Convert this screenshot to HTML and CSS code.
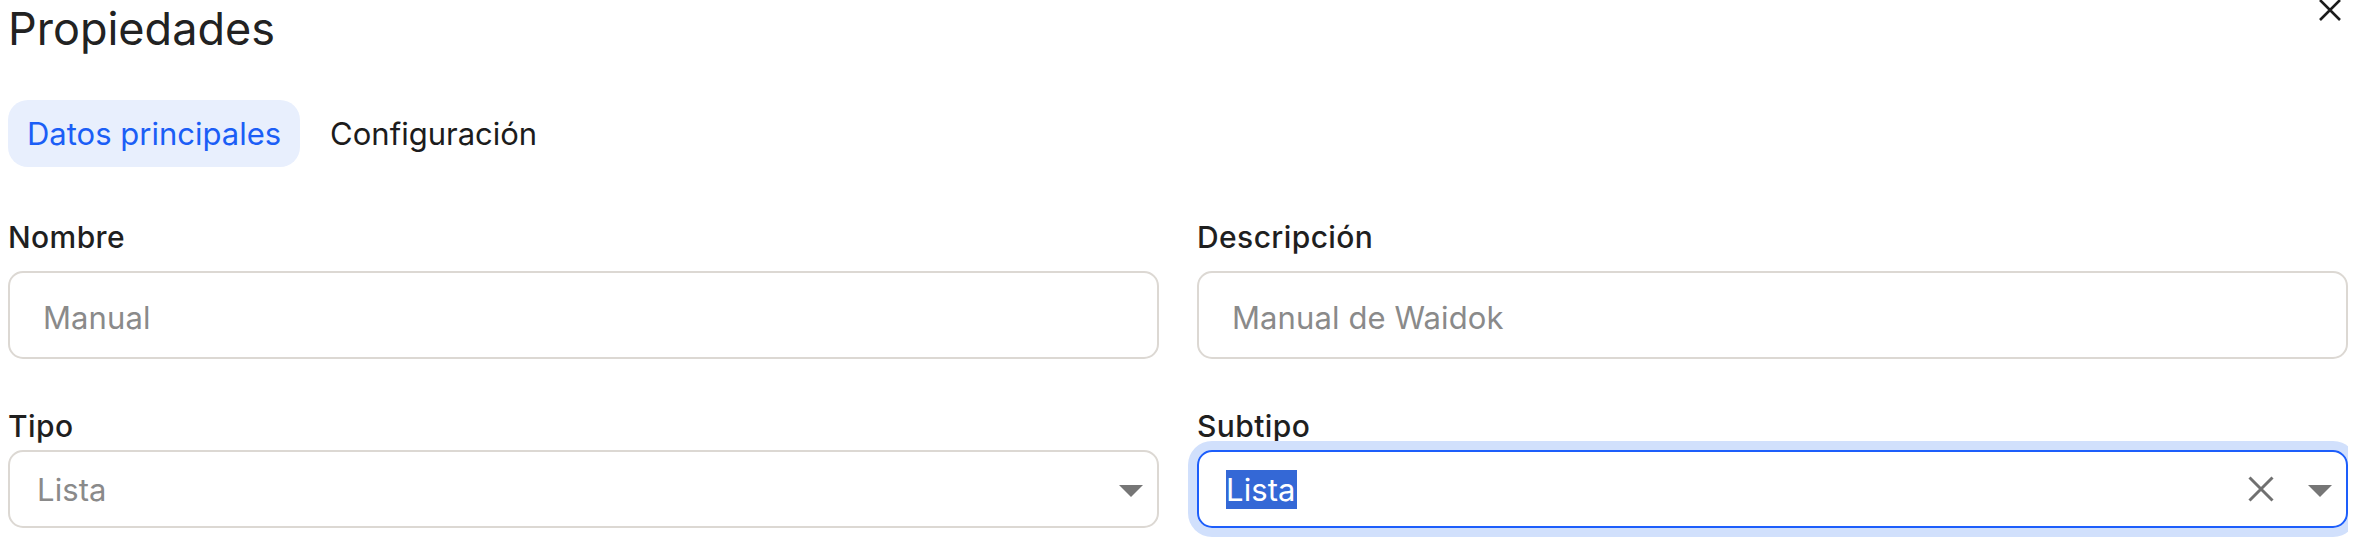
FILE: index.html
```html
<!DOCTYPE html>
<html lang="es">
<head>
<meta charset="utf-8">
<title>Propiedades</title>
<link rel="stylesheet" href="styles.css">
</head>
<body>
<div class="dialog">
  <svg class="close" viewBox="0 0 24 22" aria-label="Cerrar">
    <path d="M2 0 L22 20 M22 0 L2 20" stroke="#1c1c1c" stroke-width="2.6" fill="none"/>
  </svg>
  <h1 class="title">Propiedades</h1>
  <div class="tabs">
    <div class="tab active">Datos principales</div>
    <div class="tab">Configuración</div>
  </div>
  <div class="form">
    <div class="field">
      <div class="label">Nombre</div>
      <div class="input"><span class="placeholder">Manual</span></div>
    </div>
    <div class="field">
      <div class="label">Descripción</div>
      <div class="input"><span class="placeholder">Manual de Waidok</span></div>
    </div>
    <div class="field select-field">
      <div class="label">Tipo</div>
      <div class="select">
        <span class="placeholder value">Lista</span>
        <svg class="arrow" viewBox="0 0 24 12"><path d="M0 0 H24 L12 12 Z" fill="#767676"/></svg>
      </div>
    </div>
    <div class="field select-field">
      <div class="label">Subtipo</div>
      <div class="select focused">
        <span class="value"><span class="selected">Lista</span></span>
        <svg class="clear" viewBox="0 0 26 26"><path d="M1.5 1.5 L24.5 24.5 M24.5 1.5 L1.5 24.5" stroke="#707070" stroke-width="3" fill="none"/></svg>
        <svg class="arrow" viewBox="0 0 24 12"><path d="M0 0 H24 L12 12 Z" fill="#767676"/></svg>
      </div>
    </div>
  </div>
</div>
</body>
</html>
```
FILE: styles.css
```css
html, body {
  margin: 0;
  background: #ffffff;
}
body {
  font-family: Inter, "Noto Sans", sans-serif;
  color: #1f1f1f;
}
.dialog {
  position: relative;
  padding: 1px 26px 0 8px;
}
.close {
  position: absolute;
  top: 0;
  right: 32px;
  width: 24px;
  height: 22px;
}
.title {
  margin: 0;
  font-size: 45px;
  font-weight: 400;
  line-height: 56px;
  color: #222222;
}
.tabs {
  display: flex;
  gap: 11px;
  margin-top: 43px;
}
.tab {
  height: 67px;
  padding: 0 19px;
  border-radius: 20px;
  display: flex;
  align-items: center;
  font-size: 31px;
  letter-spacing: 0;
  color: #1c1c1c;
}
.tab.active {
  background: #e8effd;
  color: #1b5ef6;
}
.form {
  display: grid;
  grid-template-columns: 1fr 1fr;
  column-gap: 38px;
  row-gap: 49px;
  margin-top: 52px;
  padding-bottom: 14px;
  overflow: hidden;
}
.field {
  display: flex;
  flex-direction: column;
  gap: 16px;
  min-width: 0;
}
.field.select-field {
  gap: 6px;
}
.label {
  font-size: 30px;
  font-weight: 500;
  line-height: 36px;
  letter-spacing: 0.4px;
  color: #1f1f1f;
}
.input {
  box-sizing: border-box;
  height: 88px;
  border: 2px solid #dcd8d3;
  border-radius: 15px;
  padding: 4px 33px 0;
  display: flex;
  align-items: center;
  font-size: 31px;
  letter-spacing: 0.1px;
}
.placeholder {
  color: #8a8a8a;
}
.select {
  box-sizing: border-box;
  height: 78px;
  border: 2px solid #dcd8d3;
  border-radius: 15px;
  padding: 0 14px 0 27px;
  display: flex;
  align-items: center;
  font-size: 31px;
  letter-spacing: 0.1px;
}
.select.focused {
  border-color: #1d5efb;
  box-shadow: 0 0 0 9px #d1e0fc;
}
.value {
  flex: 1;
  min-width: 0;
}
.selected {
  display: inline-block;
  height: 39px;
  line-height: 39px;
  padding-right: 1px;
  background: #3468d6;
  color: #ffffff;
}
.clear {
  width: 26px;
  height: 26px;
  margin-right: 34px;
}
.arrow {
  width: 24px;
  height: 12px;
  margin-top: 3px;
}
```
